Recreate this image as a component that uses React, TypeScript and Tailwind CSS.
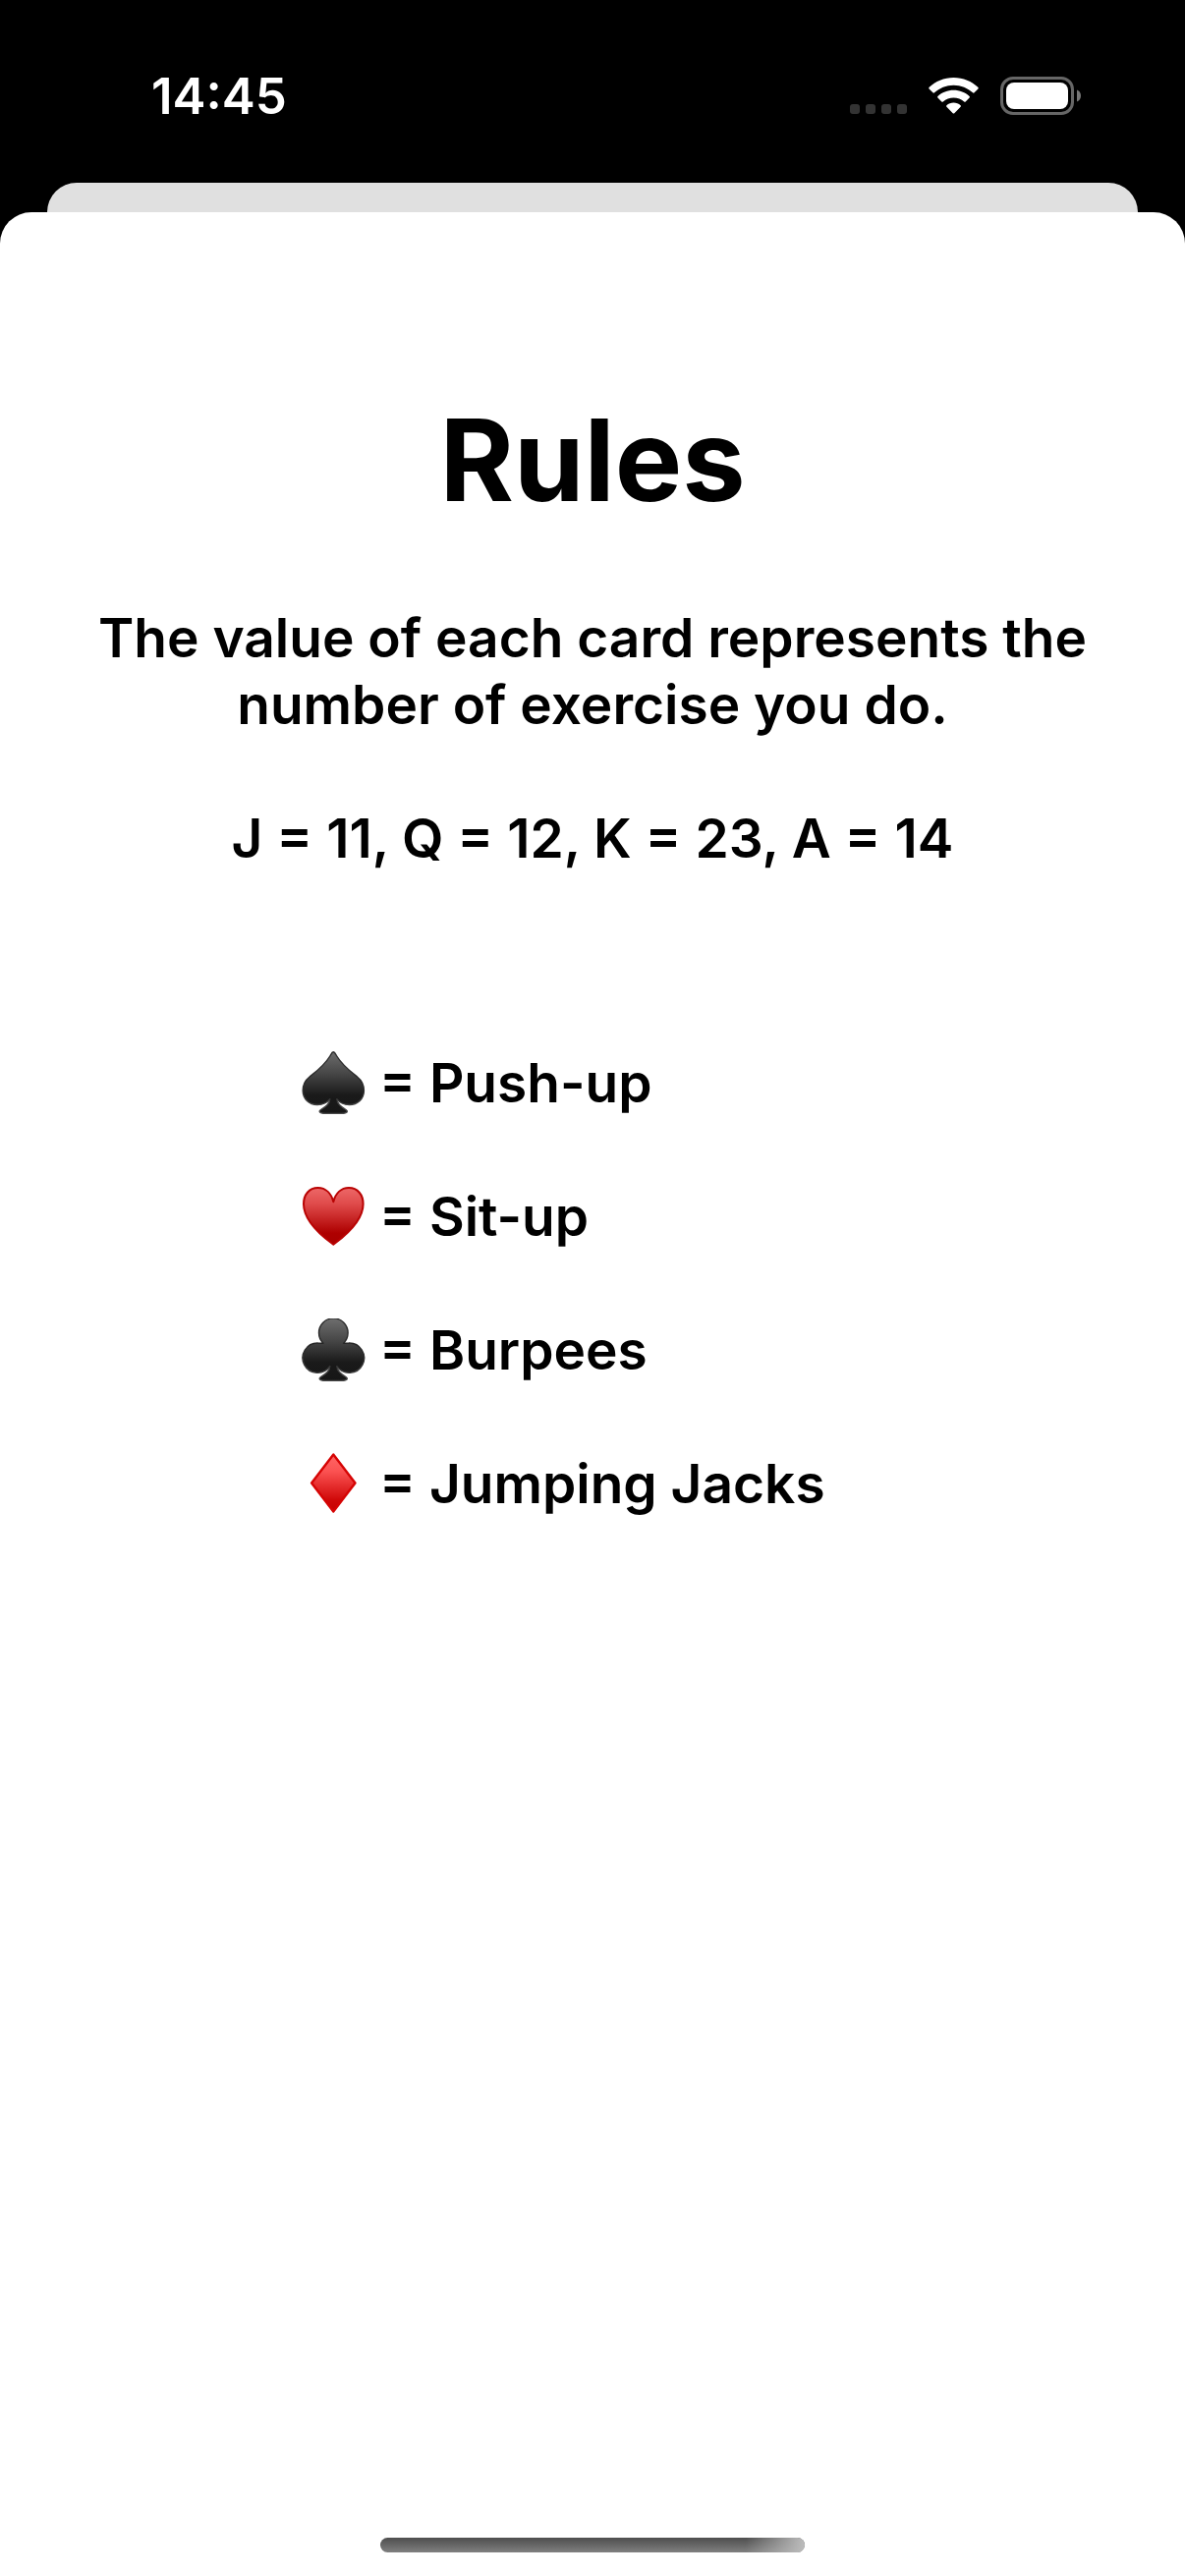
import type { ReactNode } from "react";

const STEM = "M28.7 48.7C29 53 24 57 19.5 59.5C16.5 61.5 19 63.3 24 63.5H40.6C45.6 63.3 48 61.5 45 59.5C40.6 57 35.6 53 35.9 48.7Z";

function SuitIcon({ label, children }: { label: string; children: ReactNode }) {
  return (
    <svg role="img" aria-label={label} viewBox="0 0 65 64" className="h-16 w-[65px] shrink-0">
      <defs>
        <linearGradient id="black-suit" gradientUnits="userSpaceOnUse" x1="0" y1="0" x2="0" y2="64">
          <stop offset="0" stopColor="#6e6e6e" />
          <stop offset="0.35" stopColor="#474747" />
          <stop offset="0.7" stopColor="#1a1a1a" />
          <stop offset="1" stopColor="#161616" />
        </linearGradient>
        <linearGradient id="black-edge" gradientUnits="userSpaceOnUse" x1="0" y1="0" x2="0" y2="64">
          <stop offset="0" stopColor="#2c2c2c" />
          <stop offset="0.5" stopColor="#262626" />
          <stop offset="1" stopColor="#4a4a4a" />
        </linearGradient>
        <linearGradient id="heart-fill" gradientUnits="userSpaceOnUse" x1="0" y1="2" x2="0" y2="61">
          <stop offset="0" stopColor="#ee6a6a" />
          <stop offset="0.3" stopColor="#df4a4a" />
          <stop offset="0.8" stopColor="#ae0000" />
          <stop offset="1" stopColor="#a80000" />
        </linearGradient>
        <linearGradient id="diamond-fill" gradientUnits="userSpaceOnUse" x1="0" y1="2" x2="0" y2="61">
          <stop offset="0" stopColor="#ff6666" />
          <stop offset="0.3" stopColor="#fb5252" />
          <stop offset="0.8" stopColor="#cf0808" />
          <stop offset="1" stopColor="#c40000" />
        </linearGradient>
      </defs>
      {children}
    </svg>
  );
}

function Spade() {
  return (
    <SuitIcon label="Spades">
      <g fill="url(#black-suit)" stroke="url(#black-edge)" strokeWidth="1.4" strokeLinejoin="round">
        <path d={STEM} />
        <path d="M32.3 0.8C33.8 0.8 34.6 3 35.8 5C41.5 14.5 49.5 20.5 56.5 26C61 29.6 63.4 34.5 63.4 40C63.4 48.6 57 54.5 48.6 54.5C43.2 54.5 38.4 52.2 35.8 48.7H28.8C26.2 52.2 21.4 54.5 16 54.5C7.6 54.5 1.2 48.6 1.2 40C1.2 34.5 3.6 29.6 8.1 26C15.1 20.5 23.1 14.5 28.8 5C30 3 30.8 0.8 32.3 0.8Z" />
      </g>
      <path d="M29.4 47.5H35.2V52H29.4Z" fill="#181818" />
    </SuitIcon>
  );
}

function Heart() {
  return (
    <SuitIcon label="Hearts">
      <path
        d="M32.3 17.2C34.5 9 40 3.1 48 3.1C57 3.1 62.6 10 62.6 19.5C62.6 34 48 49 34.2 59.3L32.3 60.7L30.4 59.3C16.6 49 2 34 2 19.5C2 10 7.6 3.1 16.6 3.1C24.6 3.1 30.1 9 32.3 17.2Z"
        fill="url(#heart-fill)"
        stroke="#b90303"
        strokeWidth="2"
        strokeLinejoin="round"
      />
    </SuitIcon>
  );
}

function Club() {
  return (
    <SuitIcon label="Clubs">
      <g fill="url(#black-suit)" stroke="url(#black-edge)" strokeWidth="1.4" strokeLinejoin="round">
        <path d={STEM} />
        <path d="M22 25.3A14.8 14.8 0 1 1 42.6 25.3C43.6 25.4 45.5 25 48 25A15.2 15.2 0 1 1 35.8 48.7H28.8A15.2 15.2 0 1 1 16.6 25C19 25 21 25.4 22 25.3Z" />
      </g>
      <path d="M29.4 47.5H35.2V52H29.4Z" fill="#181818" />
    </SuitIcon>
  );
}

function Diamond() {
  return (
    <SuitIcon label="Diamonds">
      <path
        d="M32.3 2.5L54.5 31.4L32.3 60.6L10.1 31.4Z"
        fill="url(#diamond-fill)"
        stroke="#d60404"
        strokeWidth="2.4"
        strokeLinejoin="round"
      />
    </SuitIcon>
  );
}

function Wifi() {
  return (
    <svg role="img" aria-label="Wi-Fi" viewBox="0 0 51 37" className="h-[37px] w-[51px]" fill="#fff">
      <path d="M25.5 0C35.3 0 44 3.8 50.3 9.8C50.9 10.4 50.9 11 50.4 11.5L46.6 15.3C46.1 15.8 45.5 15.8 45 15.3C39.9 10.6 33 7.7 25.5 7.7C18 7.7 11.1 10.6 6 15.3C5.5 15.8 4.9 15.8 4.4 15.3L0.6 11.5C0.1 11 0.1 10.4 0.7 9.8C7 3.8 15.7 0 25.5 0Z" />
      <path d="M25.5 12.8C31.7 12.8 37.3 15.1 41.6 19C42.1 19.5 42.1 20.1 41.6 20.6L37.7 24.4C37.2 24.9 36.7 24.9 36.2 24.5C33.3 22 29.6 20.5 25.5 20.5C21.4 20.5 17.7 22 14.8 24.5C14.3 24.9 13.8 24.9 13.3 24.4L9.4 20.6C8.9 20.1 8.9 19.5 9.4 19C13.7 15.1 19.3 12.8 25.5 12.8Z" />
      <path d="M25.5 25.6C28.2 25.6 30.7 26.6 32.6 28.2C33.1 28.7 33.1 29.2 32.6 29.7L26.3 36.2C25.8 36.7 25.2 36.7 24.7 36.2L18.4 29.7C17.9 29.2 17.9 28.7 18.4 28.2C20.3 26.6 22.8 25.6 25.5 25.6Z" />
    </svg>
  );
}

function Battery() {
  return (
    <svg role="img" aria-label="Battery full" viewBox="0 0 82 39" className="h-[39px] w-[82px]">
      <rect x="1.5" y="1.5" width="72" height="36" rx="11.5" fill="none" stroke="#666" strokeWidth="3" />
      <rect x="6" y="6" width="63" height="27" rx="8" fill="#fff" />
      <path d="M78 13.5C80.6 14.5 82 16.7 82 19.5S80.6 24.5 78 25.5Z" fill="#777" />
    </svg>
  );
}

function StatusBar() {
  return (
    <header className="flex h-[186px] items-start justify-between pt-[68px] pr-[106px] pl-[154px] text-white">
      <time className="text-[51px] leading-[60px] font-semibold">14:45</time>
      <div className="flex items-center pt-[10px]">
        <div className="mr-[22px] flex gap-[6px] pt-[27px]">
          {[0, 1, 2, 3].map((dot) => (
            <span key={dot} className="size-[10px] rounded-[3px] bg-[#333]" />
          ))}
        </div>
        <Wifi />
        <div className="ml-[22px]">
          <Battery />
        </div>
      </div>
    </header>
  );
}

const exercises = [
  { name: "Push-up", icon: <Spade /> },
  { name: "Sit-up", icon: <Heart /> },
  { name: "Burpees", icon: <Club /> },
  { name: "Jumping Jacks", icon: <Diamond /> },
];

export default function App() {
  return (
    <div className="flex min-h-screen flex-col bg-black font-['Inter',sans-serif] text-black">
      <StatusBar />
      <div className="mx-12 h-[30px] rounded-t-[30px] bg-[#e0e0e0]" />
      <main className="flex flex-1 flex-col rounded-t-[32px] bg-white pt-[181px] pb-6">
        <h1 className="text-center text-[115px] leading-[144px] font-bold">Rules</h1>
        <div className="mt-[74px] px-[72px] text-center text-[55px] leading-[68px] font-semibold">
          <p>The value of each card represents the number of exercise you do.</p>
          <p className="mt-[68px]">J = 11, Q = 12, K = 23, A = 14</p>
        </div>
        <ul className="mx-auto mt-[181px] flex w-[592px] flex-col gap-[68px] text-[55px] leading-[68px] font-semibold">
          {exercises.map(({ name, icon }) => (
            <li key={name} className="flex items-center gap-[14px]">
              {icon}
              <span>= {name}</span>
            </li>
          ))}
        </ul>
        <div className="mx-auto mt-auto h-[15px] w-[432px] rounded-full bg-linear-to-b from-[#4e4e4e] to-[#808080]">
          <div className="ml-auto h-full w-[60px] rounded-r-full bg-linear-to-r from-transparent to-[#bdbdbd]" />
        </div>
      </main>
    </div>
  );
}
